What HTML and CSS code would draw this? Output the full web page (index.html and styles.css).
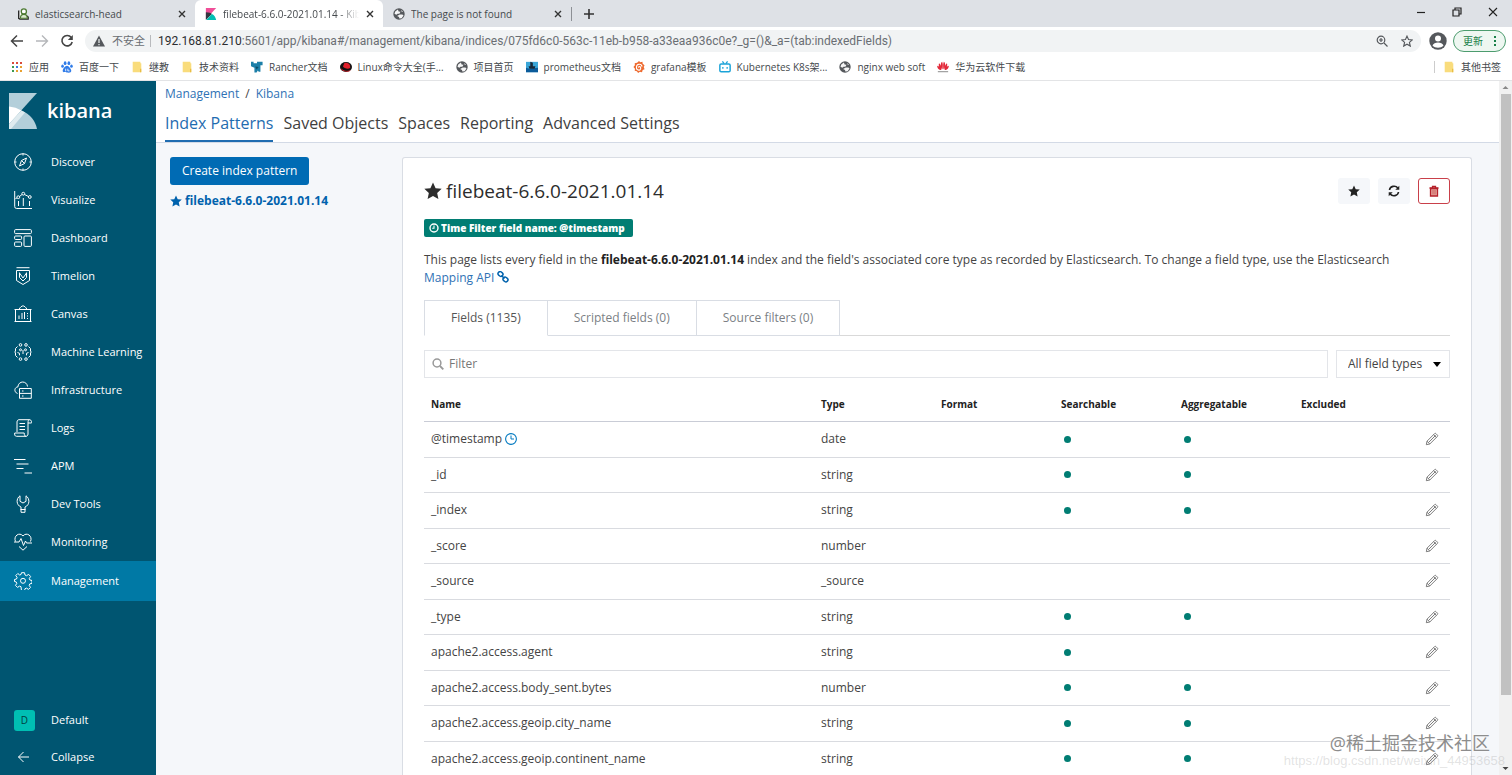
FILE: index.html
```html
<!DOCTYPE html>
<html lang="en">
<head>
<meta charset="utf-8">
<title>Kibana</title>
<link rel="stylesheet" href="styles.css">
</head>
<body>
<svg class="defs" aria-hidden="true">
  <symbol id="close" viewBox="0 0 10 10"><path d="M2 2l6 6M8 2L2 8" stroke="#333" stroke-width="1.4" fill="none"/></symbol>
  <symbol id="globe" viewBox="0 0 16 16"><circle cx="8" cy="8" r="7.6" fill="#55585c"/><path d="M3 4.500L6.500 2l1 2.500L10 5l-1.500 2.500H6L4.500 9 2 7.500z" fill="#fff" opacity=".95"/><path d="M9 8.500h3.500L14 10l-2.500 3.500-3 .5-.5-2-2.500-1.500zM11 2.500l2.500 2.500h-2z" fill="#fff" opacity=".95"/></symbol>
  <symbol id="folder" viewBox="0 0 12 14"><path d="M1 1h9v1.500h1V13H1z" fill="#f9dc7c"/><path d="M9.500 9h1.500v4H9.500z" fill="#e9bd45"/></symbol>
  <symbol id="star" viewBox="0 0 16 16"><path d="M8 .5l2.300 5 5.400.6-4 3.700 1.100 5.400L8 12.500l-4.800 2.700 1.100-5.400-4-3.700 5.400-.6z" fill="currentColor"/></symbol>
  <symbol id="pencil" viewBox="0 0 16 16"><path d="M1.500 14.500l.8-4L11 1.800a1 1 0 0 1 1.400 0l1.800 1.800a1 1 0 0 1 0 1.400L5.500 13.700zM2.300 10.500l3.200 3.200M4 12l8.200-8.200M9.800 3l3.200 3.200" fill="none" stroke="#777" stroke-width="1.100"/></symbol>
</svg>

<header class="browser">
  <div class="tabstrip">
    <div class="tab">
      <svg class="i12" viewBox="0 0 14 14"><path d="M2 3v9l1.500 1H13v-2.500L11 9" fill="#fff" stroke="#222" stroke-width="1.600"/><circle cx="8" cy="4" r="3" fill="#fff" stroke="#4d7a32" stroke-width="1.500"/><path d="M4 12c0-6 8-6 8 0z" fill="#dcebcf" stroke="#4d7a32" stroke-width="1.300"/></svg>
      <span class="tab-title">elasticsearch-head</span>
      <button class="plain" aria-label="Close tab"><svg class="i10"><use href="#close"/></svg></button>
    </div>
    <div class="tab tab-active">
      <svg class="i12" viewBox="0 0 14 14"><path d="M1 0h12L1 13z" fill="#f04e98"/><path d="M1 5c4 0 6 1 7 2L1 14z" fill="#343741"/><path d="M8 7c3 1.500 4.500 4 5 7H1.500z" fill="#00bfb3"/></svg>
      <span class="tab-title tab-fade">filebeat-6.6.0-2021.01.14 - Kib</span>
      <button class="plain" aria-label="Close tab"><svg class="i10"><use href="#close"/></svg></button>
    </div>
    <div class="tab">
      <svg class="i12"><use href="#globe"/></svg>
      <span class="tab-title">The page is not found</span>
      <button class="plain" aria-label="Close tab"><svg class="i10"><use href="#close"/></svg></button>
    </div>
    <button class="plain new-tab" aria-label="New tab"><svg class="i12" viewBox="0 0 12 12"><path d="M6 1v10M1 6h10" stroke="#333" stroke-width="1.600"/></svg></button>
    <div class="window-buttons">
      <button class="plain" aria-label="Minimize"><svg class="i10" viewBox="0 0 10 10"><path d="M1 5.500h8" stroke="#222" stroke-width="1.200"/></svg></button>
      <button class="plain" aria-label="Restore"><svg class="i10" viewBox="0 0 10 10"><path d="M1 3h6v6H1zM3 3V1h6v6H7" stroke="#222" stroke-width="1.200" fill="none"/></svg></button>
      <button class="plain" aria-label="Close"><svg class="i10" viewBox="0 0 10 10"><path d="M1 1l8 8M9 1L1 9" stroke="#222" stroke-width="1.100"/></svg></button>
    </div>
  </div>

  <div class="toolbar">
    <button class="plain" aria-label="Back"><svg class="i14" viewBox="0 0 14 14"><path d="M13 7H2M7 1.500L1.500 7 7 12.500" fill="none" stroke="#444" stroke-width="1.500"/></svg></button>
    <button class="plain" aria-label="Forward"><svg class="i14" viewBox="0 0 14 14"><path d="M1 7h11M7 1.500L12.500 7 7 12.500" fill="none" stroke="#b5b7ba" stroke-width="1.400"/></svg></button>
    <button class="plain" aria-label="Reload"><svg class="i14" viewBox="0 0 14 14"><path d="M11.300 3.500A5.200 5.200 0 1 0 12.200 8" fill="none" stroke="#444" stroke-width="1.600"/><path d="M12.800 1v5H7.800z" fill="#444"/></svg></button>
    <div class="omnibox">
      <svg class="i12" viewBox="0 0 12 12"><path d="M6 .5L12 11.500H0z" fill="#55585c"/><path d="M6 4v4M6 9v1.300" stroke="#f1f3f4" stroke-width="1.200"/></svg>
      <span class="insecure">不安全</span>
      <span class="url"><b>192.168.81.210</b>:5601/app/kibana#/management/kibana/indices/075fd6c0-563c-11eb-b958-a33eaa936c0e?_g=()&amp;_a=(tab:indexedFields)</span>
      <button class="plain" aria-label="Zoom"><svg class="i12" viewBox="0 0 12 12"><circle cx="5" cy="5" r="3.800" fill="none" stroke="#55585c" stroke-width="1.200"/><path d="M8 8l3.500 3.500M3 5h4M5 3v4" stroke="#55585c" stroke-width="1.200"/></svg></button>
      <button class="plain" aria-label="Bookmark"><svg class="i12" viewBox="0 0 16 16"><path d="M8 1.500l2 4.600 5 .5-3.800 3.300 1.200 4.900L8 12.200l-4.400 2.600 1.200-4.900L1 6.600l5-.5z" fill="none" stroke="#55585c" stroke-width="1.500"/></svg></button>
    </div>
    <button class="plain" aria-label="Profile"><svg class="i18" viewBox="0 0 18 18"><circle cx="9" cy="9" r="8.700" fill="#55585c"/><circle cx="9" cy="6.500" r="3" fill="#fff"/><path d="M3.500 13.500c1.500-4 9.500-4 11 0-2.500 3-8.500 3-11 0z" fill="#fff"/></svg></button>
    <button class="update">更新<svg class="dots" viewBox="0 0 4 12"><path d="M1 1h2v2H1zM1 5h2v2H1zM1 9h2v2H1z" fill="#188048"/></svg></button>
  </div>

  <nav class="bookmarks" aria-label="Bookmarks">
    <a href="#"><svg class="i12" viewBox="0 0 12 12"><path d="M1 1h2v2H1zM5 1h2v2H5z" fill="#d94a3c"/><path d="M9 1h2v2H9z" fill="#d94a3c"/><path d="M1 5h2v2H1z" fill="#3a9a50"/><path d="M5 5h2v2H5z" fill="#3b7de0"/><path d="M9 5h2v2H9z" fill="#e8a030"/><path d="M1 9h2v2H1z" fill="#3a9a50"/><path d="M5 9h2v2H5zM9 9h2v2H9z" fill="#e8a030"/></svg>应用</a>
    <a href="#"><svg class="i12" viewBox="0 0 14 14"><g fill="#2f7be8"><ellipse cx="4.800" cy="2.500" rx="1.600" ry="2.200"/><ellipse cx="9.200" cy="2.500" rx="1.600" ry="2.200"/><ellipse cx="1.800" cy="6" rx="1.500" ry="2"/><ellipse cx="12.200" cy="6" rx="1.500" ry="2"/><path d="M7 5.500c2 0 5 4 5 6s-2 2.500-5 2-5 .5-5-2 3-6 5-6z"/></g><path d="M5.500 9v3M8 9v2.500h2" stroke="#fff" fill="none"/></svg>百度一下</a>
    <a href="#"><svg class="i12"><use href="#folder"/></svg>继教</a>
    <a href="#"><svg class="i12"><use href="#folder"/></svg>技术资料</a>
    <a href="#"><svg class="i12" viewBox="0 0 14 14"><path d="M0 1h3v1.500h4V1h6.500v4H11v7.500H9l-1-1.500-1.500 2.500H4V8L0 6z" fill="#1c7fa8"/><path d="M5 6.500l4 .5-2.500 3z" fill="#0b4c69"/></svg>Rancher文档</a>
    <a href="#"><svg class="i12" viewBox="0 0 14 14"><ellipse cx="7" cy="7" rx="7" ry="5.800" fill="#111"/><path d="M3.500 6.500L5 2.500c2-1.500 6 0 6.500 2.500l.5 3c-2 2-7 1-8.500-1.500z" fill="#e0202a"/><path d="M1 9c3 3 8 4 11 2" stroke="#e0202a" fill="none"/></svg>Linux命令大全(手...</a>
    <a href="#"><svg class="i12"><use href="#globe"/></svg>项目首页</a>
    <a href="#"><svg class="i12" viewBox="0 0 14 14"><path d="M0 1h14v12H0z" fill="#3aa6d8"/><path d="M0 8l4 1 10-1v5H0z" fill="#0b5b9a"/><path d="M3 6h8l-1 3H4zM5 1l3 1v4H5z" fill="#182838"/></svg>prometheus文档</a>
    <a href="#"><svg class="i12" viewBox="0 0 14 14"><path d="M7 0l1.500 1.500 2.500-.5.300 2.300L13.500 5l-1 2 1 2.500-2.200 1L10.500 13 8 12.500 6 14l-1.500-2L2 11.500 2.300 9 .5 7l1.700-2L2 2.500 4.800 2z" fill="#ee6a2f"/><path d="M10.500 6.500c-.5-4-6.500-3.500-6.500.8s5 4.200 5 1.200-3-2-2.500-.8" fill="none" stroke="#fff" stroke-width="1.300"/></svg>grafana模板</a>
    <a href="#"><svg class="i12" viewBox="0 0 14 14"><rect x="1" y="3.500" width="12" height="9" rx="1.500" fill="none" stroke="#1ba3d8" stroke-width="1.700"/><path d="M4 .5L6 3M10 .5L8 3M4.500 7v2M9.500 7v2" stroke="#1ba3d8" stroke-width="1.500"/></svg>Kubernetes K8s架...</a>
    <a href="#"><svg class="i12"><use href="#globe"/></svg>nginx web soft</a>
    <a href="#"><svg class="i12" viewBox="0 0 14 14"><g fill="#e3293a"><path d="M6.500 10C4 6 4 2 6 1c1 2 1 5 .5 9zM7.500 10C10 6 10 2 8 1 7 3 7 6 7.500 10zM5.500 10C2 8 1.500 4 2.500 2.500 4.500 4 5.500 7 5.500 10zM8.500 10c3.500-2 4-6 3-7.500C9.500 4 8.500 7 8.500 10zM5 10.500C2 10.500 0 8 .3 5.500 2.500 6 4 8 5 10.500zM9 10.500c3 0 5-2.500 4.700-5C11.500 6 10 8 9 10.500z"/></g><path d="M1 12.500h12" stroke="#777"/></svg>华为云软件下载</a>
    <a class="other-bookmarks" href="#"><svg class="i12"><use href="#folder"/></svg>其他书签</a>
  </nav>
</header>

<div class="app">
  <aside class="sidebar">
    <a class="brand" href="#">
      <svg class="brand-mark" viewBox="0 0 28 36"><path d="M0 0h28L0 31z" fill="#b3cfda"/><path d="M0 13.500a27 27 0 0 1 12.500 4L0 31z" fill="#fff"/><path d="M12.500 17.500C21 21 26.500 28 28 36H0v-5z" fill="#b3cfda"/><path d="M12.500 17.500l3.500 2L2 36H0v-5z" fill="#dfebef"/></svg>
      <span>kibana</span>
    </a>
    <nav class="side-nav" aria-label="Main">
      <a href="#"><svg viewBox="0 0 18 18"><circle cx="9" cy="9" r="8.300"/><path d="M12.500 5l-2 5.500L5.500 13l2-5.500zM7.500 7.500l3 3M9 .7v1.800M9 15.500v1.800M.7 9h1.800M15.500 9h1.800"/></svg>Discover</a>
      <a href="#"><svg viewBox="0 0 18 18"><path d="M.7 0v15.500a2 2 0 0 0 2 2H18M1.500 7.500L3 7M5.500 5.500L8 3.500M10.500 3.500l4 2"/><circle cx="4.300" cy="6.200" r="1.400"/><circle cx="9.300" cy="2.700" r="1.400"/><circle cx="15.800" cy="6" r="1.400"/><path d="M4.500 10v5M9.300 7v8M15.500 10v5"/></svg>Visualize</a>
      <a href="#"><svg viewBox="0 0 18 18"><rect x=".6" y=".6" width="16.800" height="4" rx="1"/><rect x=".6" y="7" width="7" height="3.500" rx="1"/><rect x=".6" y="13" width="7" height="4.400" rx="1"/><rect x="10" y="7" width="7.400" height="10.400" rx="1"/></svg>Dashboard</a>
      <a href="#"><svg viewBox="0 0 18 18"><path d="M2.500.7h13M2.500 3.500h13v10L9 17.500l-6.500-4zM5.500 5.500v5L9 14l3.500-3.500v-5M5.500 6L9 11l3.500-5"/></svg>Timelion</a>
      <a href="#"><svg viewBox="0 0 18 18"><path d="M.5 4.500h17M1.500 4.500v12M16.500 4.500v12M.5 16.500h17M5 4.500C6 2 8 1 9 .8c1 .2 3 1.200 4 3.700M5 10.500v3.500M8 8v6M10.500 7v7M13 8.500h1M13 11h1M13 13.500h1"/></svg>Canvas</a>
      <a href="#"><svg viewBox="0 0 18 18"><circle cx="6.500" cy="1.900" r="1.300"/><circle cx="12" cy="1.900" r="1.300"/><circle cx="6.500" cy="16.100" r="1.300"/><circle cx="12" cy="16.100" r="1.300"/><circle cx="6.500" cy="6.800" r="1"/><circle cx="11.500" cy="6.800" r="1"/><path d="M3.500 3.500L1.500 5.500V8L.8 9l.7 1v2.500l2 2M14.500 3.500l2 2V8l.7 1-.7 1v2.500l-2 2M3.500 9.500l2 .8v2M14.500 9.500l-2 .8v2M9 7v4"/></svg>Machine Learning</a>
      <a href="#"><svg viewBox="0 0 18 18"><path d="M3.500 12.500C-.5 11 .5 6 3.800 6 4.500-.8 13-.3 13.500 5.500M5.500 7.500h11.800v9.800H5.500zM5.500 12.400h11.800M8 10h1.500M8 15h1.500"/></svg>Infrastructure</a>
      <a href="#"><svg viewBox="0 0 18 18"><path d="M3 13V3c0-1.500 1-2.300 2-2.300h10.500c2.500 0 2 3.300 2 3.300H14v11c0 1.500-1 2.300-2 2.300H2.500c-2 0-2-2-1.800-3.300h9.500c0 2 .5 3.300 2 3.300M14 4c0-2 .3-3.300 1.500-3.300M5.500 4.500H11M5.500 7.500H11M5.500 10.500H11"/></svg>Logs</a>
      <a href="#"><svg viewBox="0 0 18 18"><path d="M0 2.500h11.500M2.500 7h12M2.500 11.500h7M10.500 16H18"/></svg>APM</a>
      <a href="#"><svg viewBox="0 0 18 18"><path d="M7 17.300h4V12c5-2 5-8.500 1-11.200v5.500L9 8 6 6.300V.8C2 3.500 2 10 7 12zM6.500 14.500h5"/></svg>Dev Tools</a>
      <a href="#"><svg viewBox="0 0 18 18"><path d="M1.500 8.500C-1 3 5.500-1.500 9 3c3.500-4.500 10-0 7.500 5.500M0 9h5l2-3.500 2.500 7L11.500 8l1 2H18M5 13.500l4 3.700 4-3.700"/></svg>Monitoring</a>
      <a href="#" class="current" aria-current="page"><svg viewBox="0 0 18 18"><path d="M7.500.7h3l.5 2.300 1.500.7 2.200-1.300 1.900 2.100-1.300 2 .6 1.500 2.100.5v2.800l-2.200.6-.6 1.500 1.300 2-2 2-2-1.300-1.500.6-.5 2.300h-3L7 14.700l-1.500-.6-2 1.300-2-2 1.300-2-.6-1.500L0.500 9.500V7.500L2.500 7l.6-1.500-1.300-2 2-2 1.900 1.500L7 2.500z"/><circle cx="9" cy="8.800" r="2.500"/></svg>Management</a>
    </nav>
    <nav class="side-nav side-foot" aria-label="Space">
      <a href="#"><span class="space">D</span>Default</a>
      <a href="#"><svg viewBox="0 0 18 18"><path d="M15 9H4.500M9.500 4L4.500 9l5 5"/></svg>Collapse</a>
    </nav>
  </aside>

  <main class="content">
    <header class="page-head">
      <nav class="crumbs" aria-label="Breadcrumb"><a href="#">Management</a><span>/</span><a href="#">Kibana</a></nav>
      <nav class="sections" aria-label="Sections">
        <a href="#" class="selected">Index Patterns</a><a href="#">Saved Objects</a><a href="#">Spaces</a><a href="#">Reporting</a><a href="#">Advanced Settings</a>
      </nav>
    </header>
    <div class="columns">
      <div class="patterns">
        <button class="primary">Create index pattern</button>
        <a href="#" class="pattern"><svg class="i12"><use href="#star"/></svg>filebeat-6.6.0-2021.01.14</a>
      </div>
      <section class="panel">
        <div class="title-row">
          <h1><svg class="i18"><use href="#star"/></svg>filebeat-6.6.0-2021.01.14</h1>
          <div class="actions">
            <button class="act" aria-label="Set as default"><svg class="i12"><use href="#star"/></svg></button>
            <button class="act" aria-label="Refresh fields"><svg class="i12" viewBox="0 0 12 12"><path d="M1.500 5C2 1 7.500 0 9.800 3M10.500 7C10 11 4.500 12 2.200 9" fill="none" stroke="#222" stroke-width="1.600"/><path d="M11.300.8v4H7.300zM.7 11.200v-4h4z" fill="#222"/></svg></button>
            <button class="act danger" aria-label="Delete"><svg class="i12" viewBox="0 0 12 12"><path d="M1.500 3h9M4.500 3V1.300h3V3" fill="none" stroke="#b5202a" stroke-width="1.300"/><path d="M2.500 3.500h7v7.500h-7z" fill="#e3a29c" stroke="#b5202a" stroke-width="1.300"/><path d="M5 5v4.500M7 5v4.500" stroke="#c4504f" stroke-width=".8"/></svg></button>
          </div>
        </div>
        <span class="badge"><svg class="i10" viewBox="0 0 10 10"><circle cx="5" cy="5" r="4" fill="none" stroke="#fff" stroke-width="1.400"/><path d="M5 2.500V5.300H3.200" fill="none" stroke="#fff" stroke-width="1.100"/></svg>Time Filter field name: @timestamp</span>
        <p class="intro">This page lists every field in the <strong>filebeat-6.6.0-2021.01.14</strong> index and the field's associated core type as recorded by Elasticsearch. To change a field type, use the Elasticsearch <a href="#">Mapping API <svg class="i12" viewBox="0 0 12 12"><g fill="none" stroke="#0062ad" stroke-width="1.500"><rect x="1" y="1" width="5" height="4" rx="1.800" transform="rotate(40 3.500 3)"/><rect x="6" y="6.500" width="5" height="4" rx="1.800" transform="rotate(40 8.500 8.500)"/><path d="M4.500 4.500l3 3"/></g></svg></a></p>
        <div class="subtabs" role="tablist">
          <button role="tab" aria-selected="true">Fields (1135)</button><button role="tab" aria-selected="false">Scripted fields (0)</button><button role="tab" aria-selected="false">Source filters (0)</button>
        </div>
        <div class="filters">
          <label class="search"><svg class="i12" viewBox="0 0 12 12"><circle cx="5" cy="5" r="3.900" fill="none" stroke="#999" stroke-width="1.500"/><path d="M8 8l3.300 3.300" stroke="#999" stroke-width="1.800"/></svg><input type="text" placeholder="Filter" aria-label="Filter"></label>
          <div class="select-wrap"><select aria-label="Field type"><option>All field types</option></select><svg class="caret" viewBox="0 0 8 5"><path d="M0 0h8L4 5z"/></svg></div>
        </div>
        <table>
          <colgroup><col><col class="c"><col class="c"><col class="c"><col class="c"><col class="c"><col class="edit"></colgroup>
          <thead><tr><th>Name</th><th>Type</th><th>Format</th><th>Searchable</th><th>Aggregatable</th><th>Excluded</th><th></th></tr></thead>
          <tbody>
            <tr><td>@timestamp <svg class="i12 clock" viewBox="0 0 12 12"><path d="M6 2.500V6h3" fill="none" stroke="#0079c0"/><circle cx="6" cy="6" r="5.400" fill="none" stroke="#0079c0" stroke-width="1.100"/></svg></td><td>date</td><td></td><td><i class="dot"></i></td><td><i class="dot"></i></td><td></td><td><button class="plain" aria-label="Edit"><svg class="i14"><use href="#pencil"/></svg></button></td></tr>
            <tr><td>_id</td><td>string</td><td></td><td><i class="dot"></i></td><td><i class="dot"></i></td><td></td><td><button class="plain" aria-label="Edit"><svg class="i14"><use href="#pencil"/></svg></button></td></tr>
            <tr><td>_index</td><td>string</td><td></td><td><i class="dot"></i></td><td><i class="dot"></i></td><td></td><td><button class="plain" aria-label="Edit"><svg class="i14"><use href="#pencil"/></svg></button></td></tr>
            <tr><td>_score</td><td>number</td><td></td><td></td><td></td><td></td><td><button class="plain" aria-label="Edit"><svg class="i14"><use href="#pencil"/></svg></button></td></tr>
            <tr><td>_source</td><td>_source</td><td></td><td></td><td></td><td></td><td><button class="plain" aria-label="Edit"><svg class="i14"><use href="#pencil"/></svg></button></td></tr>
            <tr><td>_type</td><td>string</td><td></td><td><i class="dot"></i></td><td><i class="dot"></i></td><td></td><td><button class="plain" aria-label="Edit"><svg class="i14"><use href="#pencil"/></svg></button></td></tr>
            <tr><td>apache2.access.agent</td><td>string</td><td></td><td><i class="dot"></i></td><td></td><td></td><td><button class="plain" aria-label="Edit"><svg class="i14"><use href="#pencil"/></svg></button></td></tr>
            <tr><td>apache2.access.body_sent.bytes</td><td>number</td><td></td><td><i class="dot"></i></td><td><i class="dot"></i></td><td></td><td><button class="plain" aria-label="Edit"><svg class="i14"><use href="#pencil"/></svg></button></td></tr>
            <tr><td>apache2.access.geoip.city_name</td><td>string</td><td></td><td><i class="dot"></i></td><td><i class="dot"></i></td><td></td><td><button class="plain" aria-label="Edit"><svg class="i14"><use href="#pencil"/></svg></button></td></tr>
            <tr><td>apache2.access.geoip.continent_name</td><td>string</td><td></td><td><i class="dot"></i></td><td><i class="dot"></i></td><td></td><td><button class="plain" aria-label="Edit"><svg class="i14"><use href="#pencil"/></svg></button></td></tr>
          </tbody>
        </table>
      </section>
    </div>
  </main>
  <div class="scrollbar" aria-hidden="true">
    <svg viewBox="0 0 13 13"><path d="M3.500 8h6L6.500 5z" fill="#888"/></svg>
    <div class="rail"><div class="thumb"></div></div>
    <svg viewBox="0 0 13 13"><path d="M3.500 5h6L6.500 8z" fill="#444"/></svg>
  </div>
</div>
<div class="marks"><div class="mark-name">@稀土掘金技术社区</div><div class="mark-url">https://blog.csdn.net/weixin_44953658</div></div>
</body>
</html>
```

FILE: styles.css
```css
* { box-sizing: border-box; }
body {
  margin: 0; height: 100vh; overflow: hidden; display: flex; flex-direction: column;
  font: 12px/18px "Open Sans", "Noto Sans CJK SC", sans-serif; color: #444; background: #fff;
}
a { color: #2f72b5; text-decoration: none; }
button, input, select { font: inherit; color: inherit; }
svg { flex: none; display: block; }
.defs { position: absolute; width: 0; height: 0; }
.plain { border: 0; padding: 0; background: none; display: grid; place-items: center; flex: none; }
.i10 { width: 10px; height: 10px; }
.i12 { width: 12px; height: 12px; }
.i14 { width: 14px; height: 14px; }
.i18 { width: 18px; height: 18px; }

.browser { flex: none; border-bottom: 1px solid #e3e4e6; }
.tabstrip { display: flex; height: 27px; background: #dee1e6; padding-left: 7px; }
.tab { width: 188px; display: flex; align-items: center; gap: 6px; padding: 0 8px 0 10px; font-size: 10px; color: #45494d; }
.tab-active { background: #fff; border-radius: 6px 6px 0 0; }
.tab-title { flex: 1; overflow: hidden; white-space: nowrap; }
.tab-fade { mask-image: linear-gradient(90deg, #000 85%, transparent); }
.new-tab { border-left: 1px solid #8d9095; height: 14px; margin-top: 7px; padding-left: 11px; }
.window-buttons { margin-left: auto; display: flex; align-items: center; gap: 26px; padding: 0 14px 4px 0; }
.toolbar { display: flex; align-items: center; height: 27px; gap: 11px; padding: 0 6px 0 10px; }
.omnibox { flex: 1; display: flex; align-items: center; gap: 7px; height: 22px; border-radius: 11px; background: #f1f3f4; padding: 0 8px; color: #6a6e73; }
.omnibox .plain { margin-left: 6px; }
.insecure { font-size: 11px; border-right: 1px solid #b8babd; padding-right: 5px; line-height: 12px; }
.url { flex: 1; white-space: nowrap; overflow: hidden; font-family: Roboto, "Open Sans", sans-serif; }
.url b { font-weight: 400; color: #2b2d30; }
.toolbar > .plain + .update { margin-left: -5px; }
.omnibox + .plain { margin-left: -3px; }
.update { display: flex; align-items: center; gap: 10px; height: 22px; border: 1px solid #4c9c6e; border-radius: 11px; background: #eef7f1; color: #188048; font-size: 10px; padding: 0 8px 0 9px; }
.dots { width: 4px; height: 12px; }
.bookmarks { display: flex; align-items: center; gap: 12px; height: 26px; padding: 0 11px 1px; font-size: 10px; }
.bookmarks a { display: flex; align-items: center; gap: 6px; color: #45494d; white-space: nowrap; }
.bookmarks .other-bookmarks { margin-left: auto; border-left: 1px solid #ccc; padding-left: 8px; line-height: 12px; }

.app { flex: 1; min-height: 0; display: flex; }
.sidebar { width: 156px; flex: none; background: #005571; display: flex; flex-direction: column; font-size: 11px; }
.brand { display: flex; align-items: center; gap: 10px; padding: 12px 9px 14px; color: #fff; font-size: 20px; font-weight: 600; }
.brand-mark { width: 28px; height: 36px; }
.side-nav a { display: flex; align-items: center; gap: 19px; height: 38px; padding-left: 14px; color: #fff; white-space: nowrap; }
.side-nav svg { width: 18px; height: 18px; fill: none; stroke: #fff; stroke-width: 1; }
.side-nav .current { background: #0079a5; height: 40px; }
.side-foot { margin-top: auto; }
.side-foot a:first-child { gap: 16px; }
.side-foot a:last-child { height: 36px; }
.space { width: 21px; height: 21px; border-radius: 3px; background: #00bfb3; color: #00403e; font-size: 10px; line-height: 21px; text-align: center; }

.content { flex: 1; min-width: 0; display: flex; flex-direction: column; background: #f5f7fa; }
.page-head { flex: none; background: #fff; border-bottom: 1px solid #d3dae6; padding: 4px 9px 0; }
.crumbs { display: flex; gap: 6px; }
.sections { display: flex; gap: 10px; font-size: 16px; line-height: 24px; padding-top: 8px; }
.sections a { color: #3f3f3f; padding-bottom: 5px; border-bottom: 2px solid transparent; }
.sections .selected { color: #1f6cb0; border-color: #1f6cb0; }
.columns { flex: 1; min-height: 0; display: flex; padding: 14px 27px 0 14px; }
.patterns { width: 232px; flex: none; display: flex; flex-direction: column; align-items: flex-start; gap: 7px; }
.primary { border: 0; border-radius: 3px; background: #006bb4; color: #fff; height: 28px; padding: 0 12px; }
.pattern { display: flex; align-items: center; gap: 3px; font-weight: 700; color: #0062ad; }
.panel { flex: 1; min-width: 0; background: #fff; border: 1px solid #d9dde4; border-bottom: 0; border-radius: 3px 3px 0 0; padding: 19px 21px 0; }
.title-row { display: flex; justify-content: space-between; align-items: center; }
h1 { display: flex; align-items: center; gap: 4px; margin: 0; font-size: 19px; line-height: 28px; font-weight: 400; color: #2d2d2d; }
.actions { display: flex; gap: 8px; }
.act { display: grid; place-items: center; width: 32px; height: 26px; border: 0; border-radius: 3px; background: #f5f7fa; color: #222; }
.danger { background: #fff; border: 1px solid #c9404a; }
.badge { display: inline-flex; align-items: center; gap: 2px; height: 18px; margin-top: 14px; padding: 0 8px 0 5px; border-radius: 2px; background: #017d73; color: #fff; font-size: 10px; font-weight: 800; vertical-align: top; }
.intro { margin: 14px 0 13px; }
.intro a { white-space: nowrap; }
.intro svg { display: inline; vertical-align: -1px; }
strong { color: #222; }
.subtabs { display: flex; border-bottom: 1px solid #d9d9d9; }
.subtabs button { height: 36px; padding: 0 26px; border: 1px solid #d9dde4; border-left: 0; background: #fff; color: #7b7f85; margin-bottom: -1px; }
.subtabs button:first-child { border-left: 1px solid #d9dde4; border-bottom-color: #fff; color: #555; }
.filters { display: flex; gap: 8px; margin-top: 14px; }
.search { flex: 1; display: flex; align-items: center; gap: 5px; height: 28px; border: 1px solid #e3e5e9; padding: 0 7px; }
.search input { flex: 1; border: 0; padding: 0; outline: 0; background: none; }
.search input::placeholder { color: #777; opacity: 1; }
.select-wrap { position: relative; }
.select-wrap select { appearance: none; width: 114px; height: 28px; border: 1px solid #e3e5e9; border-radius: 0; background: #fff; padding: 0 11px; }
.caret { position: absolute; right: 9px; top: 12px; width: 8px; height: 5px; fill: #000; pointer-events: none; }
table { width: 100%; margin-top: 10px; table-layout: fixed; border-collapse: collapse; }
.c { width: 120px; }
.edit { width: 36px; }
th, td { padding: 0 7px; text-align: left; white-space: nowrap; }
th { height: 33px; font-size: 10px; color: #222; border-bottom: 1px solid #c9ccd6; }
td { height: 35px; border-bottom: 1px solid #d9dbe0; }
tr:nth-child(odd) td { height: 36px; }
td:last-child { padding: 0 0 0 11px; }
.clock { display: inline; vertical-align: -2px; }
.dot { display: block; width: 7px; height: 7px; border-radius: 50%; background: #017d73; margin-left: 3px; }

.scrollbar { width: 13px; flex: none; display: flex; flex-direction: column; background: #f1f1f1; }
.scrollbar svg { width: 13px; height: 13px; }
.rail { flex: 1; padding: 0 1px 0 2px; }
.thumb { height: 90%; background: #c1c1c1; }
.marks { position: absolute; right: 7px; bottom: 7px; text-align: right; pointer-events: none; }
.mark-name { font-size: 18px; line-height: 22px; color: #8d8d8d; text-shadow: 0 0 2px #fff; margin-right: 15px; }
.mark-url { font: 13px/14px "Liberation Sans", sans-serif; color: rgba(160, 160, 160, 0.3); }
```
